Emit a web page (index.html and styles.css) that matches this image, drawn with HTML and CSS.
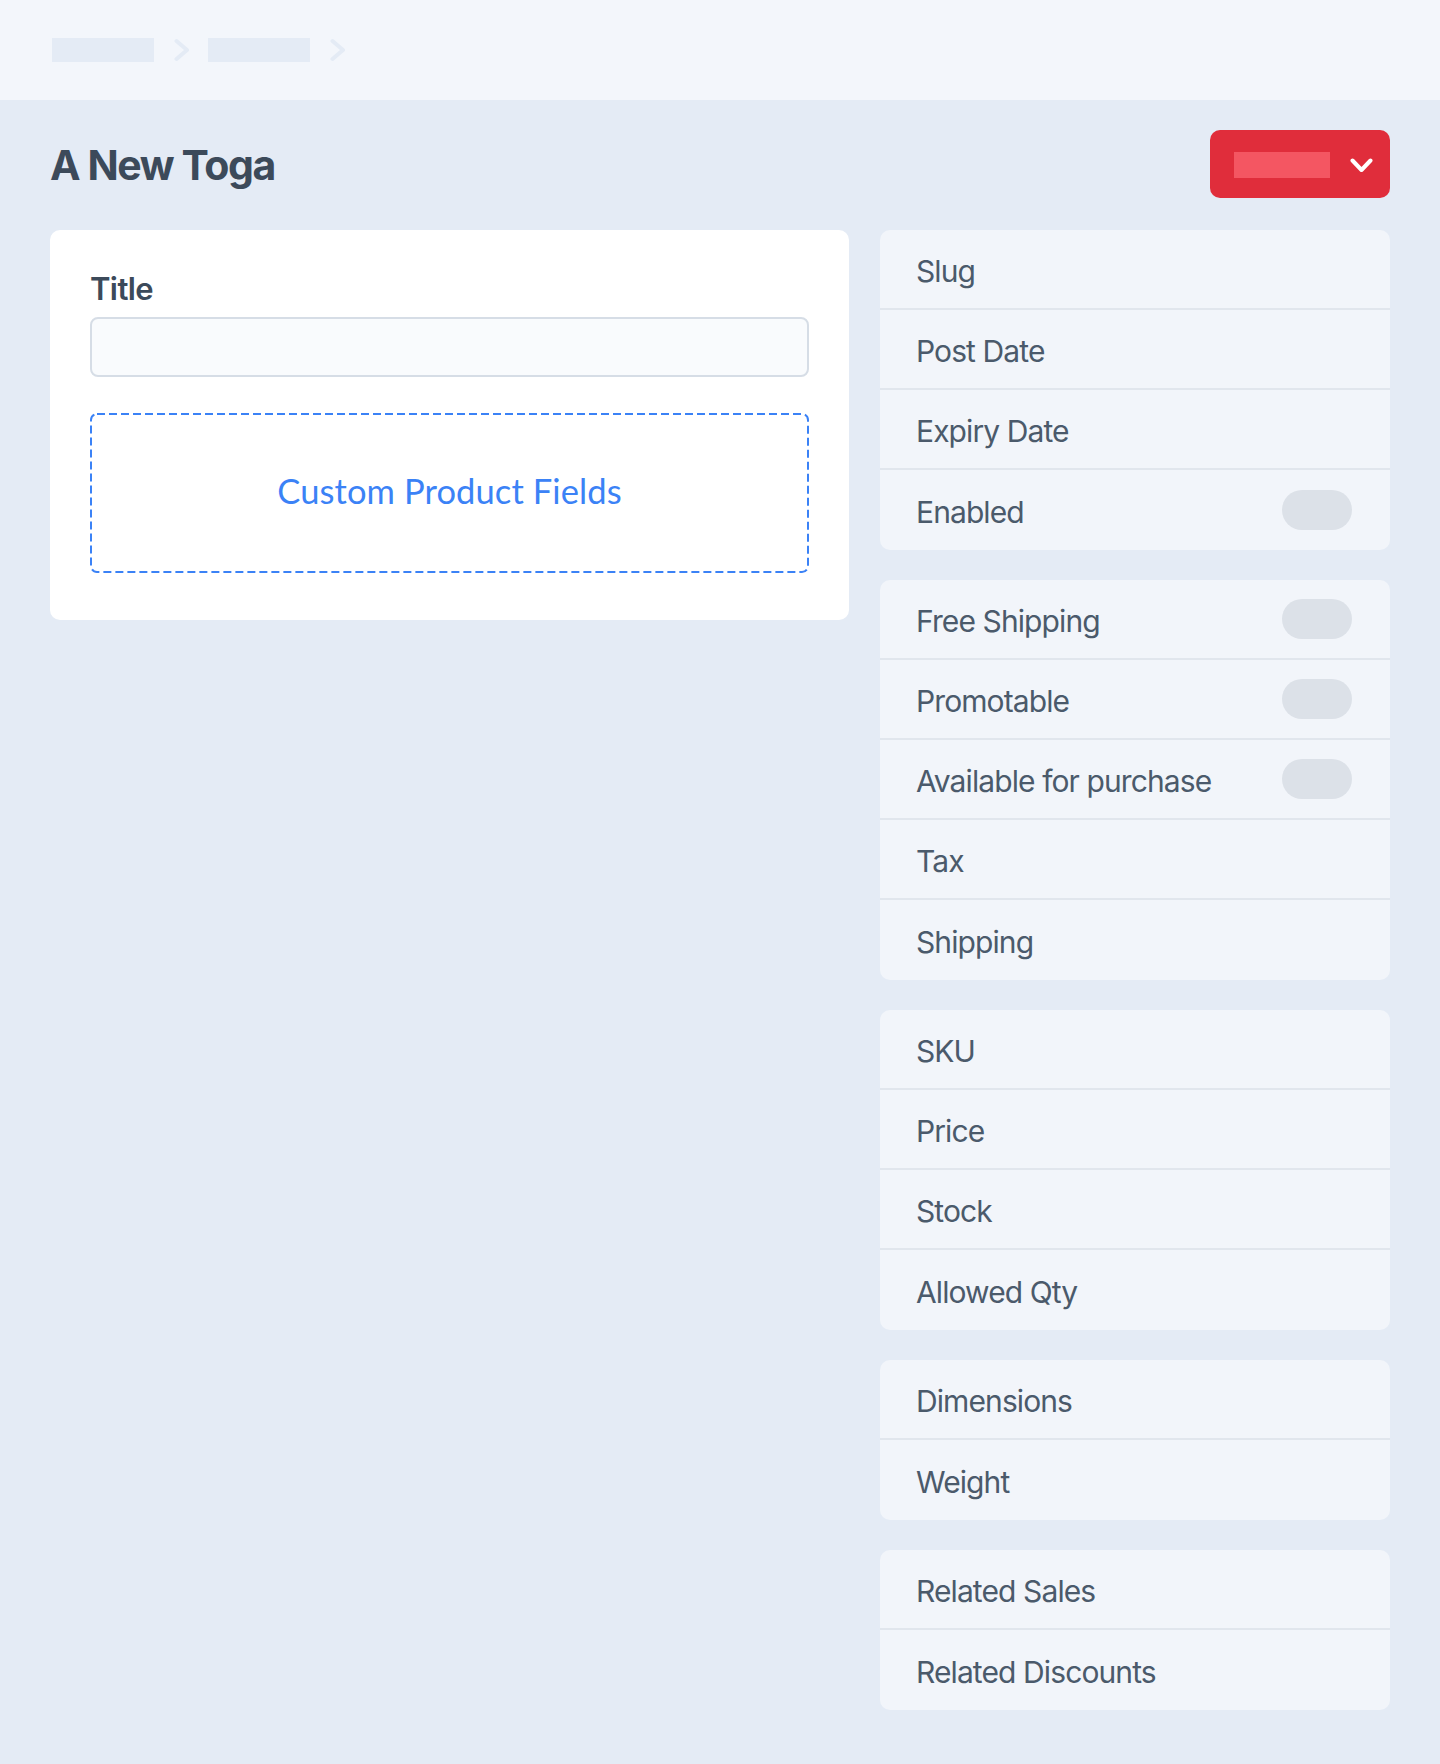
FILE: index.html
```html
<!DOCTYPE html>
<html lang="en">
<head>
<meta charset="utf-8">
<title>A New Toga</title>
<link rel="stylesheet" href="styles.css">
</head>
<body>
<header class="topbar">
  <nav class="crumbs">
    <span class="crumb"></span>
    <svg class="crumb-sep" width="16" height="24" viewBox="0 0 16 24"><polyline points="2.5,3 13,12 2.5,21" fill="none" stroke="#e4ebf5" stroke-width="4" stroke-linecap="round" stroke-linejoin="round"/></svg>
    <span class="crumb"></span>
    <svg class="crumb-sep" width="16" height="24" viewBox="0 0 16 24"><polyline points="2.5,3 13,12 2.5,21" fill="none" stroke="#e4ebf5" stroke-width="4" stroke-linecap="round" stroke-linejoin="round"/></svg>
  </nav>
</header>

<main class="page">
  <div class="title-row">
    <h1 class="page-title">A New Toga</h1>
    <button class="action-btn" type="button">
      <span class="action-label"></span>
      <svg class="action-caret" width="23" height="15" viewBox="0 0 23 15"><polyline points="2.5,2.5 11.5,12 20.5,2.5" fill="none" stroke="#ffffff" stroke-width="4" stroke-linecap="round" stroke-linejoin="round"/></svg>
    </button>
  </div>

  <div class="layout">
    <section class="card">
      <label class="field-label">Title</label>
      <div class="text-input"></div>
      <div class="dropzone">
        <svg class="dropzone-border" width="719" height="160" viewBox="0 0 719 160"><rect x="1" y="1" width="717" height="158" rx="6" ry="6" fill="none" stroke="#3b82f6" stroke-width="2" stroke-dasharray="8 4"/></svg>
        <span class="dropzone-text">Custom Product Fields</span>
      </div>
    </section>

    <aside class="sidebar">
      <div class="group">
        <div class="row"><span>Slug</span></div>
        <div class="row"><span>Post Date</span></div>
        <div class="row"><span>Expiry Date</span></div>
        <div class="row"><span>Enabled</span><span class="toggle"></span></div>
      </div>
      <div class="group">
        <div class="row"><span>Free Shipping</span><span class="toggle"></span></div>
        <div class="row"><span>Promotable</span><span class="toggle"></span></div>
        <div class="row"><span>Available for purchase</span><span class="toggle"></span></div>
        <div class="row"><span>Tax</span></div>
        <div class="row"><span>Shipping</span></div>
      </div>
      <div class="group">
        <div class="row"><span>SKU</span></div>
        <div class="row"><span>Price</span></div>
        <div class="row"><span>Stock</span></div>
        <div class="row"><span>Allowed Qty</span></div>
      </div>
      <div class="group">
        <div class="row"><span>Dimensions</span></div>
        <div class="row"><span>Weight</span></div>
      </div>
      <div class="group">
        <div class="row"><span>Related Sales</span></div>
        <div class="row"><span>Related Discounts</span></div>
      </div>
    </aside>
  </div>
</main>
</body>
</html>
```

FILE: styles.css
```css
* { box-sizing: border-box; }

html, body {
  margin: 0;
  padding: 0;
}

body {
  background: #e4ebf5;
  font-family: Inter, "Noto Sans", "Liberation Sans", sans-serif;
  color: #4b5a6b;
  min-height: 1764px;
}

.topbar {
  height: 100px;
  background: #f3f6fb;
  display: flex;
  align-items: center;
  padding-left: 52px;
}

.crumbs {
  display: flex;
  align-items: center;
}

.crumb {
  display: block;
  width: 102px;
  height: 24px;
  background: #e4ebf5;
}

.crumb-sep {
  display: block;
  margin-left: 20px;
  margin-right: 18px;
}

.page {
  padding: 0 50px;
}

.title-row {
  display: flex;
  justify-content: space-between;
  align-items: center;
  margin: 30px 0 32px;
  height: 68px;
}

.page-title {
  margin: 0;
  font-size: 41px;
  font-weight: 700;
  color: #3c4a5a;
  letter-spacing: -1.4px;
  line-height: 1;
  padding-top: 2px;
}

.action-btn {
  width: 180px;
  height: 68px;
  border: none;
  border-radius: 10px;
  background: #e02d3b;
  display: flex;
  align-items: center;
  padding: 0 17px 0 24px;
  cursor: pointer;
}

.action-label {
  display: block;
  width: 96px;
  height: 26px;
  background: #f45662;
  margin-top: 2px;
}

.action-caret {
  display: block;
  margin-left: 20px;
  margin-top: 2px;
}

.layout {
  display: grid;
  grid-template-columns: 799px 510px;
  column-gap: 31px;
  align-items: start;
}

.card {
  background: #ffffff;
  border-radius: 10px;
  padding: 40px 40px 47px;
  display: flex;
  flex-direction: column;
}

.field-label {
  display: block;
  font-size: 31px;
  line-height: 38px;
  font-weight: 600;
  color: #3c4a5a;
  letter-spacing: -0.6px;
}

.text-input {
  margin-top: 9px;
  height: 60px;
  border: 2px solid #d6dde6;
  border-radius: 8px;
  background: #f9fbfd;
}

.dropzone {
  position: relative;
  margin-top: 36px;
  height: 160px;
  display: flex;
  align-items: center;
  justify-content: center;
}

.dropzone-border {
  position: absolute;
  left: 0;
  top: 0;
}

.dropzone-text {
  position: relative;
  font-family: Lato, "Noto Sans", sans-serif;
  font-size: 34.5px;
  color: #3b82f6;
  letter-spacing: 0.1px;
  padding-bottom: 5px;
}

.sidebar {
  display: flex;
  flex-direction: column;
  gap: 30px;
}

.group {
  background: #f2f5fa;
  border-radius: 10px;
  overflow: hidden;
}

.row {
  height: 80px;
  display: flex;
  align-items: center;
  justify-content: space-between;
  padding: 0 38px 0 36px;
  border-bottom: 2px solid #e1e6ed;
  font-size: 30px;
  letter-spacing: -0.9px;
  color: #4b5a6b;
}

.row span:first-child {
  padding-top: 4px;
}

.row:last-child {
  border-bottom: none;
}

.toggle {
  display: block;
  width: 70px;
  height: 40px;
  border-radius: 20px;
  background: #dce1e8;
}
```
